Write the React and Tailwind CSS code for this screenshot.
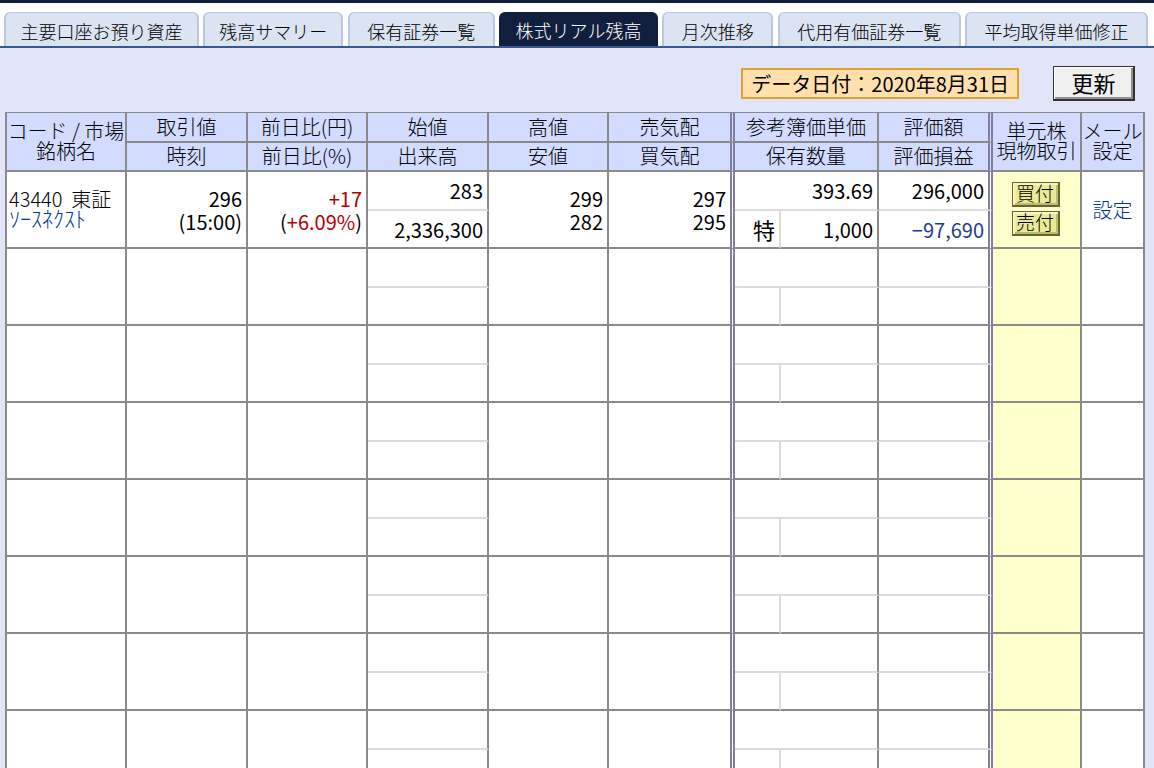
const tabs = [
  { label: "主要口座お預り資産", width: "w-[195px]" },
  { label: "残高サマリー", width: "w-[140px]" },
  { label: "保有証券一覧", width: "w-[147px]" },
  { label: "株式リアル残高", width: "w-[159px]", active: true },
  { label: "月次推移", width: "w-[111px]" },
  { label: "代用有価証券一覧", width: "w-[183px]" },
  { label: "平均取得単価修正", width: "w-[183px]" },
];

const holding = {
  code: "43440",
  market: "東証",
  name: "ｿｰｽﾈｸｽﾄ",
  price: "296",
  time: "(15:00)",
  change: "+17",
  changeRate: "+6.09%",
  open: "283",
  volume: "2,336,300",
  high: "299",
  low: "282",
  ask: "297",
  bid: "295",
  cost: "393.69",
  account: "特",
  quantity: "1,000",
  value: "296,000",
  profit: "−97,690",
};

const rows = [holding, null, null, null, null, null, null, null];

const head =
  "border-r-2 border-b-2 border-[#8a8a8a] bg-[#d2dcff] p-0 pb-px text-center text-[20px] leading-5 font-light whitespace-nowrap";
const headDouble =
  "border-r-[5px] border-b-2 border-[#8a8a8a] [border-right-style:double] border-r-[#7f80a0] bg-[#d2dcff] p-0 pb-px text-center text-[20px] leading-5 font-light whitespace-nowrap";
const full = "border-r-2 border-b-2 border-[#8a8a8a] bg-white px-1 py-0 text-right";
const upper = "border-r-2 border-b-2 border-r-[#8a8a8a] border-b-[#dcdcdc] bg-white px-1 py-0 text-right";
const double = "[border-right-style:double] border-r-[5px] border-b-2 border-r-[#7f80a0] bg-white px-1 py-0 text-right";

function Tab({ label, width, active }) {
  return (
    <a
      href="#"
      aria-current={active ? "page" : undefined}
      className={
        width +
        " flex h-[34px] items-center justify-center rounded-t-md pt-0.5 text-[18px] leading-6 font-light whitespace-nowrap " +
        (active ? "bg-[#111f3e] text-white" : "border-x-2 border-t border-[#bac8e2] bg-[#dae4f2] text-black")
      }
    >
      {label}
    </a>
  );
}

function TradeButton({ children }) {
  return (
    <button
      type="button"
      className="flex h-[25px] w-12 items-center justify-center border border-r-2 border-b-2 border-[#666633] bg-[#eaea94] pb-0.5 text-[19px] leading-5 font-light shadow-[inset_2px_2px_0_#f8f8c4,inset_-2px_-2px_0_#bcbc68]"
    >
      {children}
    </button>
  );
}

function HoldingRows({ item }) {
  const r = item || {};
  return (
    <tbody>
      <tr className="h-[39px]">
        <td rowSpan={2} className="border-x-2 border-b-2 border-[#8a8a8a] bg-white px-0.5 pt-0 pb-1.5 text-left leading-5 font-light whitespace-nowrap">
          {item && (
            <>
              <div>{r.code}&nbsp; {r.market}</div>
              <a href="#" className="block text-[22px] leading-4 text-[#003399]">{r.name}</a>
            </>
          )}
        </td>
        <td rowSpan={2} className={full}>
          <div>{r.price}</div>
          <div>{r.time}</div>
        </td>
        <td rowSpan={2} className={full}>
          {item && (
            <>
              <div className="text-[#b40000]">{r.change}</div>
              <div>(<span className="text-[#b40000]">{r.changeRate}</span>)</div>
            </>
          )}
        </td>
        <td className={upper}>{r.open}</td>
        <td rowSpan={2} className={full}>
          <div>{r.high}</div>
          <div>{r.low}</div>
        </td>
        <td rowSpan={2} className={double + " border-b-[#8a8a8a]"}>
          <div>{r.ask}</div>
          <div>{r.bid}</div>
        </td>
        <td colSpan={2} className={upper}>{r.cost}</td>
        <td className={double + " border-b-[#dcdcdc]"}>{r.value}</td>
        <td rowSpan={2} className="border-r-2 border-b-2 border-[#8a8a8a] bg-[#ffffcc] p-0 pr-0.5 pb-0.5">
          {item && (
            <div className="flex flex-col items-center gap-1">
              <TradeButton>買付</TradeButton>
              <TradeButton>売付</TradeButton>
            </div>
          )}
        </td>
        <td rowSpan={2} className="border-r-2 border-b-2 border-[#8a8a8a] bg-white p-0 text-center font-light">
          {item && <a href="#" className="text-[#003399]">設定</a>}
        </td>
      </tr>
      <tr className="h-[38px]">
        <td className={full}>{r.volume}</td>
        <td className="border-r-2 border-b-2 border-r-[#dcdcdc] border-b-[#8a8a8a] bg-white px-1 py-0 text-right text-[22px]">
          {r.account}
        </td>
        <td className={full}>{r.quantity}</td>
        <td className={double + " border-b-[#8a8a8a] text-[#1f3a93]"}>{r.profit}</td>
      </tr>
    </tbody>
  );
}

export default function App() {
  return (
    <div className="min-h-screen bg-[#e2e4f8] font-['Noto_Sans_CJK_JP',sans-serif] text-black">
      <header className="border-t-[3px] border-b-2 border-t-[#111f3e] border-b-[#39598c] bg-white pt-[9px]">
        <nav aria-label="口座管理" className="flex justify-between pr-[6px] pl-1">
          {tabs.map((t) => (
            <Tab key={t.label} {...t} />
          ))}
        </nav>
      </header>

      <main className="pr-[9px] pl-[5px]">
        <div className="flex items-center justify-end gap-[34px] pt-[18px] pr-[10px] pb-[11px]">
          <p className="flex h-[31px] items-center border-2 border-[#dfa030] bg-[#ffe0ac] px-2 text-[20px] leading-6 whitespace-nowrap">
            データ日付：2020年8月31日
          </p>
          <button
            type="button"
            className="flex h-[35px] w-[82px] items-center justify-center border border-r-2 border-b-2 border-[#333333] bg-[#f0f0f0] pb-0.5 text-[22px] leading-6 shadow-[inset_1px_1px_0_#ffffff,inset_-2px_-2px_0_#909090]"
          >
            更新
          </button>
        </div>

        <table className="w-full table-fixed border-separate border-spacing-0 border-t border-[#8a8a8a] text-[20px] leading-[23px] font-normal">
          <colgroup>
            <col className="w-[122px]" />
            <col className="w-[121px]" />
            <col className="w-[120px]" />
            <col className="w-[121px]" />
            <col className="w-[120px]" />
            <col className="w-[126px]" />
            <col className="w-[46px]" />
            <col className="w-[98px]" />
            <col className="w-[114px]" />
            <col className="w-[89px]" />
            <col className="w-[63px]" />
          </colgroup>
          <thead>
            <tr className="h-[30px]">
              <th rowSpan={2} className={head + " border-l-2"}>
                コード / 市場
                <br />
                銘柄名
              </th>
              <th className={head}>取引値</th>
              <th className={head}>前日比(円)</th>
              <th className={head}>始値</th>
              <th className={head}>高値</th>
              <th className={headDouble}>売気配</th>
              <th colSpan={2} className={head}>参考簿価単価</th>
              <th className={headDouble}>評価額</th>
              <th rowSpan={2} className={head}>
                単元株
                <br />
                現物取引
              </th>
              <th rowSpan={2} className={head}>
                メール
                <br />
                設定
              </th>
            </tr>
            <tr className="h-[29px]">
              <th className={head}>時刻</th>
              <th className={head}>前日比(%)</th>
              <th className={head}>出来高</th>
              <th className={head}>安値</th>
              <th className={headDouble}>買気配</th>
              <th colSpan={2} className={head}>保有数量</th>
              <th className={headDouble}>評価損益</th>
            </tr>
          </thead>
          {rows.map((item, i) => (
            <HoldingRows key={i} item={item} />
          ))}
        </table>
      </main>
    </div>
  );
}
